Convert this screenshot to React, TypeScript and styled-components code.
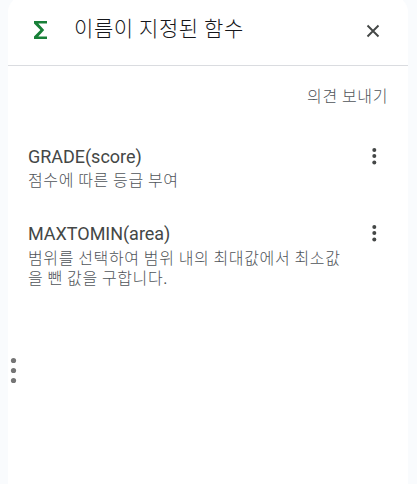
import React from "react";
import styled, { createGlobalStyle } from "styled-components";

const GlobalStyle = createGlobalStyle`
  *, *::before, *::after { box-sizing: border-box; }
  body {
    margin: 0;
    background: #f9fbfd;
    font-family: Roboto, "Noto Sans CJK KR", sans-serif;
    overflow: hidden;
  }
`;

const Page = styled.div`
  display: flex;
  height: 100vh;
  padding: 0 9px 0 8px;
  overflow: hidden;
`;

const Panel = styled.aside`
  position: relative;
  flex: 1;
  height: calc(100vh + 4px);
  margin-top: -4px;
  padding-top: 4px;
  border-radius: 16px 16px 0 0;
  background: #fff;
`;

const Header = styled.header`
  display: flex;
  align-items: center;
  height: 66px;
  padding: 0 28px 6px 26px;
  border-bottom: 1px solid #dadce0;
`;

const Title = styled.h1`
  flex: 1;
  margin: 0 0 5px 27px;
  color: #15161a;
  font: 300 21px/28px "Noto Sans CJK KR", sans-serif;
  letter-spacing: 0.6px;
  white-space: nowrap;
`;

const IconButton = styled.button`
  display: flex;
  flex: none;
  padding: 0;
  border: 0;
  background: none;
`;

const CloseButton = styled(IconButton)`
  margin-top: 2px;
`;

const Feedback = styled.div`
  display: flex;
  justify-content: flex-end;
  height: 80px;
  padding: 19px 20px 0;
`;

const Text = styled.span`
  color: #505459;
  font: 300 16px/20px "Noto Sans CJK KR", sans-serif;
  letter-spacing: 0.63px;
  white-space: pre-line;
`;

const List = styled.ul`
  display: flex;
  flex-direction: column;
  gap: 34px;
  margin: 0;
  padding: 0 31px 0 20px;
  list-style: none;
`;

const Item = styled.li`
  display: flex;
  justify-content: space-between;
  align-items: flex-start;
`;

const Details = styled.div`
  display: flex;
  flex-direction: column;
`;

const Name = styled.span`
  height: 23.4px;
  color: #444746;
  font: 400 18px/22px Roboto, sans-serif;
  letter-spacing: -0.03px;
  white-space: nowrap;
`;

const ResizeHandle = styled.div`
  position: absolute;
  top: 361px;
  left: 2px;
  display: flex;
`;

const SigmaIcon = () => (
  <svg width="13" height="18" viewBox="0 0 13 18" fill="#188038">
    <path d="M0 0H13V2.6H4.3L10.2 9L4.3 15.4H13V18H0V15.5L6.4 9L0 2.5Z" />
  </svg>
);

const CloseIcon = () => (
  <svg width="14" height="14" viewBox="0 0 14 14" stroke="#444746" strokeWidth="1.9">
    <path d="M1.5 1.5L12.5 12.5M12.5 1.5L1.5 12.5" />
  </svg>
);

const MoreIcon = () => (
  <svg width="6" height="20" viewBox="0 0 6 20" fill="#444746">
    <circle cx="3.3" cy="3.9" r="2" />
    <circle cx="3.3" cy="10.1" r="2" />
    <circle cx="3.3" cy="16.4" r="2" />
  </svg>
);

const HandleIcon = () => (
  <svg width="7" height="28" viewBox="0 0 7 28" fill="#757575">
    <circle cx="3.5" cy="3.5" r="2.6" />
    <circle cx="3.5" cy="13.5" r="2.6" />
    <circle cx="3.5" cy="23.5" r="2.6" />
  </svg>
);

const functions = [
  { name: "GRADE(score)", description: "점수에 따른 등급 부여" },
  {
    name: "MAXTOMIN(area)",
    description: "범위를 선택하여 범위 내의 최대값에서 최소값\n을 뺀 값을 구합니다.",
  },
];

export default function App() {
  return (
    <>
      <GlobalStyle />
      <Page>
        <Panel>
          <Header>
            <SigmaIcon />
            <Title>이름이 지정된 함수</Title>
            <CloseButton aria-label="닫기">
              <CloseIcon />
            </CloseButton>
          </Header>
          <Feedback>
            <Text>의견 보내기</Text>
          </Feedback>
          <List>
            {functions.map((fn) => (
              <Item key={fn.name}>
                <Details>
                  <Name>{fn.name}</Name>
                  <Text>{fn.description}</Text>
                </Details>
                <IconButton aria-label="더보기">
                  <MoreIcon />
                </IconButton>
              </Item>
            ))}
          </List>
          <ResizeHandle>
            <HandleIcon />
          </ResizeHandle>
        </Panel>
      </Page>
    </>
  );
}
